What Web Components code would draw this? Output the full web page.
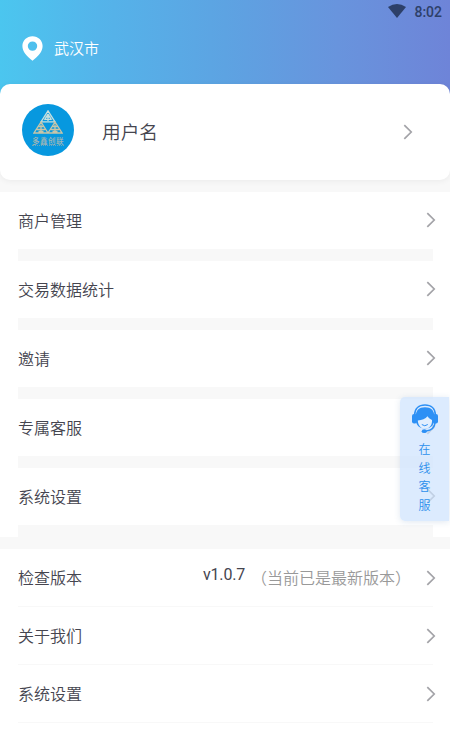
<!DOCTYPE html>
<html lang="zh-CN">
<head>
<meta charset="utf-8">
<title>我的</title>
<style>
html,body{margin:0;background:#fff}
body{width:450px;height:748px;overflow:hidden;color:#45454f;font-family:"Roboto","Noto Sans CJK SC",sans-serif}
</style>
</head>
<body>
<profile-page></profile-page>
<script>
const define = (name, html) => {
  const t = document.createElement('template');
  t.innerHTML = html;
  customElements.define(name, class extends HTMLElement {
    constructor() {
      super();
      this.attachShadow({mode: 'open'}).appendChild(t.content.cloneNode(true));
    }
  });
};

define('chevron-icon', `
<style>:host{display:block;width:10px;height:16px;flex:none}svg{display:block}</style>
<svg width="10" height="16" viewBox="0 0 10 16" fill="none" stroke="#a3a3a8" stroke-width="1.700"><path d="M1.300 1.200 8.200 8 1.300 14.800"/></svg>`);

define('top-header', `
<style>
:host{display:flex;flex-direction:column;height:100px;box-sizing:border-box;background:linear-gradient(90deg,#4bc6ef 0,#54b4ea 22%,#5da3e2 50%,#6894dd 75%,#6e84d8 100%)}
.status{display:flex;justify-content:flex-end;align-items:center;gap:8px;height:24px;padding-right:8px;color:#2d4069;font-size:14px;font-weight:500}
.status svg{margin-top:-2px}
.place{display:flex;align-items:center;gap:11px;height:48px;padding-left:22px;color:#fff;font-size:15px;font-weight:350}
.place span{margin-top:-1px}
</style>
<div class="status">
<svg width="18" height="14" viewBox="0 0 18 14"><path fill="#2d4069" d="M0 2.900Q9-2.900 18 2.900L9 14Z"/></svg><span>8:02</span></div>
<div class="place">
<svg width="21" height="25" viewBox="0 0 21 25"><path fill="#fff" fill-rule="evenodd" d="M10.500.2C4.800.2.4 4.500.4 10c0 5.600 4.200 10.300 10.100 14.800C16.400 20.300 20.600 15.600 20.600 10 20.600 4.500 16.200.2 10.500.2Zm0 5.200a4.700 4.700 0 1 1 0 9.400 4.700 4.700 0 0 1 0-9.400Z"/></svg><span><slot></slot></span></div>`);

define('brand-avatar', `
<style>
:host{display:flex;flex-direction:column;align-items:center;width:52px;height:52px;border-radius:50%;background:#0798df;flex:none}
svg{display:block;margin-top:6px}
span{font:500 7.500px/9px "Noto Sans CJK SC",sans-serif;letter-spacing:.5px;color:#a4b7b5;margin-top:2px;white-space:nowrap}
i{width:32px;border-top:1px dotted #6ca9bd}
</style>
<svg width="30" height="24" viewBox="0 0 30 24" fill="none" stroke-width="1.300">
<g stroke="#c8dfdd"><path d="M15 .8 8 11.800H22ZM15 4 11.500 9.800M15 4l3.500 5.800M12.500 7h5M11.500 9.300h7M15 5v6"/></g>
<g stroke="#c8c5a8"><path d="M8 12 1 23H15ZM22 12l-7 11h14ZM5.500 16.500h5M4 19.500h8M8 14.500V22M19.500 16.500h5M18 19.500h8M22 14.500V22M5.500 21.500h5M19.500 21.500h5"/></g></svg>
<span>多鑫创联</span><i></i>`);

define('user-card', `
<style>
:host{display:flex;align-items:center;height:96px;margin-top:-16px;box-sizing:border-box;padding:0 37px 4px 22px;background:#fff;border-radius:10px;box-shadow:0 1px 6px rgba(0,0,0,.06);position:relative}
.name{flex:1;margin-left:28px;font-size:18.700px;font-weight:350;line-height:28px;padding-top:5px}
chevron-icon{margin-top:4px}
</style>
<brand-avatar></brand-avatar><div class="name"><slot></slot></div><chevron-icon></chevron-icon>`);

define('menu-row', `
<style>
:host{display:block;background:#fff}
.row{display:flex;align-items:center;height:57px;padding:0 14px 0 18px;font-size:16px;font-weight:350;line-height:24px}
.label{flex:1;padding-top:2px}
chevron-icon{margin-top:-2px}
:host([thin]) chevron-icon{margin-top:0}
.rule{height:12px;margin:0 17px 0 18px;background:#f8f8f8}
:host([thin]) .rule{height:1px}
</style>
<div class="row"><div class="label"><slot></slot></div><slot name="detail"></slot><chevron-icon></chevron-icon></div><div class="rule"></div>`);

define('version-note', `
<style>
:host{display:flex;align-items:center;margin-right:15px}
b{font-weight:400;color:#45454f;margin-top:-5px;letter-spacing:-.2px}
span{color:#999;margin-left:6px;padding-top:2px}
</style>
<b><slot></slot></b><span>（当前已是最新版本）</span>`);

define('service-tab', `
<style>
:host{position:absolute;left:400px;top:397px;width:49px;height:124px;box-sizing:border-box;padding-top:7px;display:flex;flex-direction:column;align-items:center;background:rgba(205,227,254,.7);border-radius:5px 0 0 5px;box-shadow:0 1px 6px rgba(60,110,170,.16);color:#2d90ec}
svg{display:block}
.t{width:12px;margin-top:6px;font-size:12px;line-height:18.670px;font-weight:350;word-break:break-all}
</style>
<svg width="26" height="31" viewBox="0 0 26 31">
<path fill="#2d90f5" d="M3.800 12C3.800 6 7 3.200 13 3.200S22.200 6 22.200 12v5c-.7 4.500-3.700 7.500-9.200 7.500S4.500 21.500 3.800 17Z"/>
<path fill="#e2effe" d="M5.800 16.500c4.200-.2 7.700-1.800 9.700-4.200 1.200 1.800 2.700 3 4.500 3.700.4 5-2.500 8.800-7 8.800-4 0-6.900-3.300-7.200-8.300Z"/>
<path fill="none" stroke="#2d90f5" stroke-width="1.600" d="M2.700 11C2.700 4.500 7 1 13 1s10.300 3.500 10.300 10M23.200 18c-.5 5-3.500 8.500-9 9"/>
<rect x="0" y="10" width="5" height="9.500" rx="2" fill="#2d90f5"/><rect x="21" y="10" width="5" height="9.500" rx="2" fill="#2d90f5"/>
<ellipse cx="12.300" cy="27.200" rx="2.600" ry="1.900" fill="#2d90f5"/><path d="M9.800 20.500q3 2.500 6 0" stroke="#2d90f5" fill="none"/></svg>
<div class="t"><slot></slot></div>`);

define('profile-page', `
<style>
:host{display:block;position:relative;width:450px;height:748px;overflow:hidden;background:#fff}
main{display:flex;flex-direction:column;background:#f8f8f8}
section{margin-top:12px}
</style>
<main>
<top-header>武汉市</top-header>
<user-card>用户名</user-card>
<section><menu-row>商户管理</menu-row><menu-row>交易数据统计</menu-row><menu-row>邀请</menu-row><menu-row>专属客服</menu-row><menu-row>系统设置</menu-row></section>
<section><menu-row thin>检查版本<version-note slot="detail">v1.0.7</version-note></menu-row><menu-row thin>关于我们</menu-row><menu-row thin>系统设置</menu-row></section>
</main>
<service-tab>在线客服</service-tab>`);
</script>
</body>
</html>
